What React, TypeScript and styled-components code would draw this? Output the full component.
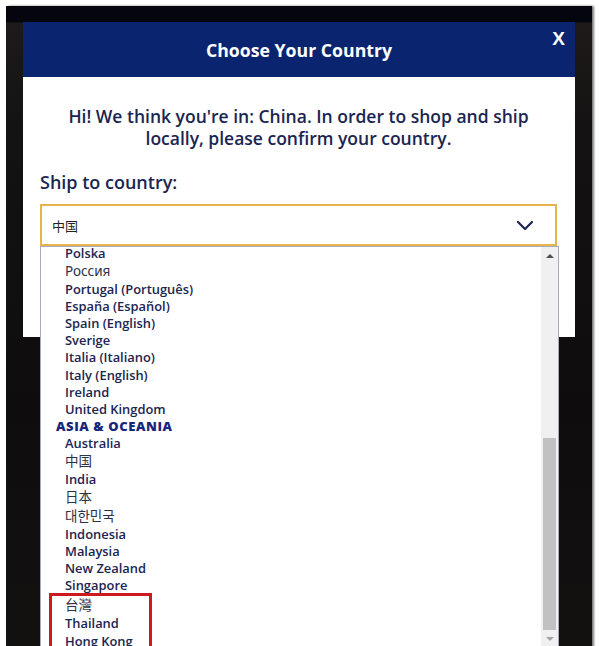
import React from 'react';
import styled, { createGlobalStyle } from 'styled-components';

const GlobalStyle = createGlobalStyle`
  html, body {
    margin: 0;
    padding: 0;
    background: #ffffff;
    overflow: hidden;
  }
  body {
    font-family: 'Open Sans', 'Noto Sans', 'Noto Sans CJK SC', sans-serif;
  }
`;

const Backdrop = styled.div`
  margin: 6px 0 0 6px;
  width: 586px;
  height: 660px;
  background: linear-gradient(180deg, #05050d 0px, #05050d 16px, #1d1a19 17px, #151213 120px, #0e0c0d 400px, #141111 100%);
  box-shadow: 2px 0 2px rgba(90, 90, 90, 0.8);
  padding: 16px 0 0 17px;
  box-sizing: border-box;
`;

const Modal = styled.div`
  width: 552px;
  height: 315px;
  background: #ffffff;
  position: relative;
`;

const Header = styled.div`
  height: 55px;
  background: #0a2470;
  display: grid;
  grid-template-columns: 1fr auto 1fr;
  align-items: center;
  color: #ffffff;
`;

const Title = styled.h2`
  grid-column: 2;
  margin: 0;
  font-size: 17.7px;
  font-weight: 700;
`;

const Close = styled.button`
  grid-column: 3;
  justify-self: end;
  align-self: start;
  margin: 6px 10px 0 0;
  padding: 0;
  border: 0;
  background: none;
  color: #ffffff;
  font-family: 'Liberation Sans', Arial, sans-serif;
  font-size: 19px;
  font-weight: 700;
  cursor: pointer;
`;

const Body = styled.div`
  padding: 28px 18px 0 17px;
  color: #1a2551;
`;

const Intro = styled.p`
  margin: 0 0 22px;
  text-align: center;
  font-size: 17.5px;
  font-weight: 600;
  line-height: 22px;
`;

const Label = styled.div`
  font-size: 18px;
  font-weight: 600;
  line-height: 22px;
  margin-bottom: 11px;
`;

const SelectWrap = styled.div`
  position: relative;
`;

const SelectBox = styled.div`
  height: 42px;
  box-sizing: border-box;
  border: 2px solid #e8b54c;
  display: flex;
  align-items: center;
  justify-content: space-between;
  padding: 0 21px 0 10px;
  font-family: 'Noto Sans CJK SC', sans-serif;
  font-size: 13px;
  color: #222;
`;

const Dropdown = styled.div`
  position: absolute;
  top: 42px;
  left: 0;
  width: 519px;
  height: 402px;
  box-sizing: border-box;
  border: 1px solid #a4adbd;
  background: #ffffff;
  display: flex;
  z-index: 2;
`;

const Options = styled.ul`
  flex: 1;
  list-style: none;
  margin: -2px 0 0;
  padding: 0;
  overflow: hidden;
`;

const Option = styled.li<{ $native?: boolean }>`
  height: ${({ $native }) => ($native ? '19px' : '17.1px')};
  line-height: ${({ $native }) => ($native ? '19px' : '17px')};
  padding-left: 24px;
  font-size: ${({ $native }) => ($native ? '13.5px' : '12.9px')};
  font-weight: ${({ $native }) => ($native ? 400 : 600)};
  color: ${({ $native }) => ($native ? '#2b3149' : '#1a2551')};
  font-family: ${({ $native }) =>
    $native ? "'Noto Sans', 'Noto Sans CJK TC', sans-serif" : "'Open Sans', sans-serif"};
  white-space: nowrap;
`;

const Group = styled.li`
  height: 17px;
  line-height: 17px;
  padding-left: 15px;
  font-size: 13px;
  font-weight: 800;
  letter-spacing: 0.6px;
  color: #16267a;
`;

const Highlight = styled.li`
  width: 97px;
  margin: -1px 0 0 8px;
  border: 3px solid #cc1a1f;
  border-bottom: 0;
  list-style: none;

  & > ul {
    list-style: none;
    margin: 0;
    padding: 0;
  }
  & li {
    padding-left: 13px;
  }
`;

const Scrollbar = styled.div`
  width: 17px;
  background: #f0f0f0;
  display: flex;
  flex-direction: column;
`;

const ArrowBtn = styled.div<{ $down?: boolean }>`
  height: 17px;
  display: flex;
  align-items: center;
  justify-content: center;

  &::after {
    content: '';
    border-left: 4px solid transparent;
    border-right: 4px solid transparent;
    ${({ $down }) =>
      $down ? 'border-top: 4px solid #a3a3a3;' : 'border-bottom: 4px solid #505050;'}
  }
`;

const Track = styled.div`
  flex: 1;
  padding: 174px 2px 0;
`;

const Thumb = styled.div`
  height: 192px;
  background: #c1c1c1;
`;

const Chevron = () => (
  <svg width="18" height="11" viewBox="0 0 18 11" fill="none">
    <path d="M2 2l7 7 7-7" stroke="#1a2551" strokeWidth="2.2" strokeLinecap="round" strokeLinejoin="round" />
  </svg>
);

type Row = { name: string; native?: boolean };

const europe: Row[] = [
  { name: 'Polska' },
  { name: 'Россия', native: true },
  { name: 'Portugal (Português)' },
  { name: 'España (Español)' },
  { name: 'Spain (English)' },
  { name: 'Sverige' },
  { name: 'Italia (Italiano)' },
  { name: 'Italy (English)' },
  { name: 'Ireland' },
  { name: 'United Kingdom' },
];

const asia: Row[] = [
  { name: 'Australia' },
  { name: '中国', native: true },
  { name: 'India' },
  { name: '日本', native: true },
  { name: '대한민국', native: true },
  { name: 'Indonesia' },
  { name: 'Malaysia' },
  { name: 'New Zealand' },
  { name: 'Singapore' },
];

const marked: Row[] = [
  { name: '台灣', native: true },
  { name: 'Thailand' },
  { name: 'Hong Kong' },
];

export default function App() {
  return (
    <>
      <GlobalStyle />
      <Backdrop>
        <Modal>
          <Header>
            <Title>Choose Your Country</Title>
            <Close>X</Close>
          </Header>
          <Body>
            <Intro>
              Hi! We think you're in: China. In order to shop and ship
              <br />
              locally, please confirm your country.
            </Intro>
            <Label>Ship to country:</Label>
            <SelectWrap>
              <SelectBox>
                <span>中国</span>
                <Chevron />
              </SelectBox>
              <Dropdown>
                <Options>
                  {europe.map((r) => (
                    <Option key={r.name} $native={r.native}>{r.name}</Option>
                  ))}
                  <Group>ASIA &amp; OCEANIA</Group>
                  {asia.map((r) => (
                    <Option key={r.name} $native={r.native}>{r.name}</Option>
                  ))}
                  <Highlight>
                    <ul>
                      {marked.map((r) => (
                        <Option key={r.name} $native={r.native}>{r.name}</Option>
                      ))}
                    </ul>
                  </Highlight>
                </Options>
                <Scrollbar>
                  <ArrowBtn />
                  <Track>
                    <Thumb />
                  </Track>
                  <ArrowBtn $down />
                </Scrollbar>
              </Dropdown>
            </SelectWrap>
          </Body>
        </Modal>
      </Backdrop>
    </>
  );
}
